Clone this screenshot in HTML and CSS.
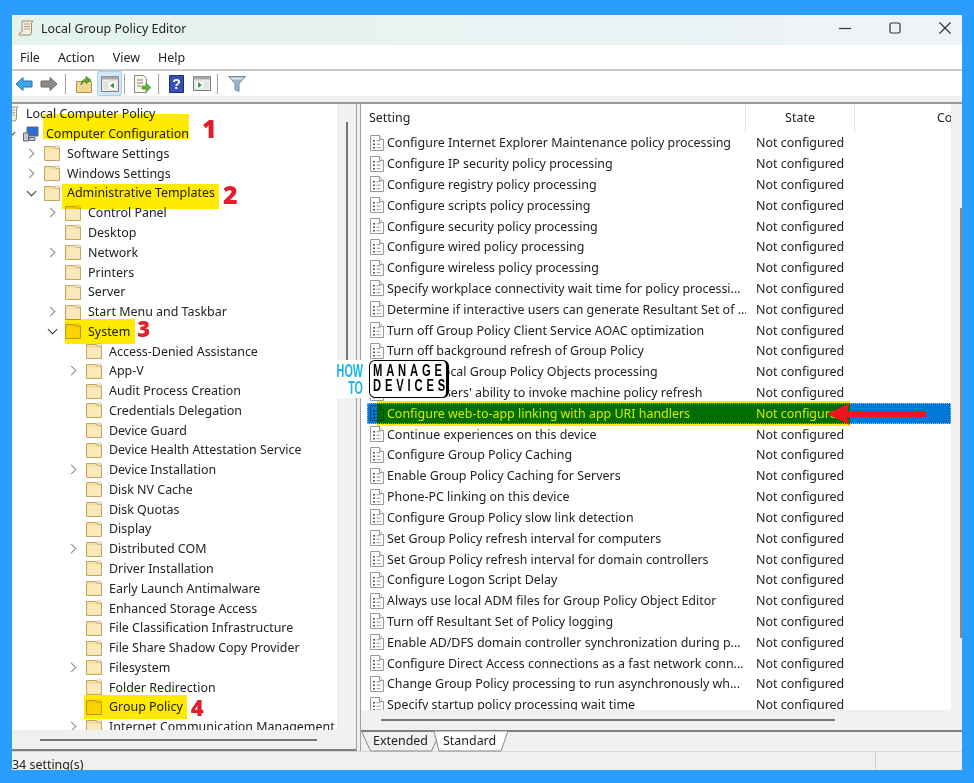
FILE: index.html
```html
<!DOCTYPE html>
<html lang="en">
<head>
    <meta charset="UTF-8">
    <meta name="viewport" content="width=device-width, initial-scale=1.0">
    <title>Local Group Policy Editor</title>
    <link rel="stylesheet" href="styles.css">
</head>
<body>
    <svg class="sprites" width="0" height="0">
        <symbol id="folder" viewBox="0 0 16 16">
            <path d="M.5 15.500V1.500h9.500l1 1.500h4.500v12.500z" fill="#f6dfa2" stroke="#c4a562"/>
            <path d="M1.500 4.500h13v10h-13z" fill="#f9e9bb"/>
            <path d="M11 1h4v2h-4z" fill="#fff" stroke="#c4a562" stroke-width=".6"/>
        </symbol>
        <symbol id="doc" viewBox="0 0 16 16">
            <path d="M1.500.5h9l4 4v11h-13z" fill="#fff" stroke="#999"/>
            <path d="M10.500.5v4h4" fill="#eee" stroke="#999"/>
            <path d="M4 5h2v1.500H4zM4 8.500h2V10H4zM4 12h2v1.500H4z" fill="#555"/>
            <path d="M7.500 5.700h4M7.500 9.200h4M7.500 12.700h4" stroke="#999"/>
        </symbol>
        <symbol id="scroll" viewBox="0 0 16 16">
            <path d="M4 1h11l-1.500 2v9l-1 3H1l1.500-3H4z" fill="#f4eeda" stroke="#9a8f70"/>
            <path d="M6 4h6M6 6.500h6M6 9h6" stroke="#a89f85"/>
        </symbol>
    </svg>

    <div class="window">
        <div class="titlebar">
            <svg class="title-icon"><use href="#scroll"/></svg>
            <span class="title-text">Local Group Policy Editor</span>
            <div class="controls">
                <svg width="12" height="12" viewBox="0 0 12 12"><path d="M0 6.500h12" stroke="#333" stroke-width="1.200"/></svg>
                <svg width="12" height="12" viewBox="0 0 12 12"><rect x="1" y="1" width="10" height="10" rx="1.500" fill="none" stroke="#333" stroke-width="1.200"/></svg>
                <svg width="12" height="12" viewBox="0 0 12 12"><path d="M.5.5l11 11M11.500.5l-11 11" stroke="#333" stroke-width="1.200"/></svg>
            </div>
        </div>

        <div class="menubar">
            <span>File</span>
            <span>Action</span>
            <span>View</span>
            <span>Help</span>
        </div>

        <div class="toolbar">
            <svg class="tool" width="18" height="16" viewBox="0 0 18 16"><path d="M1 8l7-6.500V5h9v6H8v3.500z" fill="#3fa6ea" stroke="#1b74b8"/></svg>
            <svg class="tool tool-fwd" width="18" height="16" viewBox="0 0 18 16"><path d="M17 8l-7-6.500V5H1v6h9v3.500z" fill="#8a8a8a" stroke="#6a6a6a"/></svg>
            <i class="tool-sep"></i>
            <svg class="tool tool-up" width="17" height="18" viewBox="0 0 17 18"><path d="M.5 6.500h15v11H.5z" fill="#f2d68e" stroke="#b5934e"/><path d="M5 10q0-5 5-6V1.500L15 5l-5 3.500V6q-3 .5-5 4z" fill="#62a832" stroke="#3f7d1c" stroke-width=".7"/></svg>
            <div class="tool-on">
                <svg width="18" height="16" viewBox="0 0 18 16"><path d="M.5.500h17v15H.5z" fill="#f4f4f4" stroke="#7a7a7a"/><path d="M.5.500h17v3H.5z" fill="#a8a8a8"/><path d="M2 5h4v9H2z" fill="#dfe6df"/><path d="M7 5h9v9H7z" fill="#fff" stroke="#bbb" stroke-width=".5"/><path d="M13 6.500v6L9 9.500z" fill="#3c9a3c"/></svg>
            </div>
            <i class="tool-sep tool-sep-b"></i>
            <svg class="tool tool-list" width="18" height="18" viewBox="0 0 18 18"><path d="M.5.500h9l3 3v14H.5z" fill="#fbf7e6" stroke="#8c8c8c"/><path d="M3 5h6M3 8h6M3 11h4" stroke="#888"/><path d="M8 11h4V8l5 4.500L12 17v-3H8z" fill="#63b23a" stroke="#3f8a1e" stroke-width=".6"/></svg>
            <i class="tool-sep tool-sep-c"></i>
            <svg class="tool tool-help" width="15" height="18" viewBox="0 0 15 18"><path d="M.5.500h14v17H.5z" fill="#3552b4" stroke="#1b2f78"/><text x="7.500" y="14" text-anchor="middle" class="help-mark">?</text></svg>
            <svg class="tool tool-pane" width="18" height="15" viewBox="0 0 18 15"><path d="M.5.500h17v14H.5z" fill="#f4f4f4" stroke="#7a7a7a"/><path d="M.5.500h17v3H.5z" fill="#a8a8a8"/><path d="M2 5h9v8H2z" fill="#fff" stroke="#bbb" stroke-width=".5"/><path d="M12 5h4v8h-4z" fill="#dfe6df"/><path d="M5 6v6l4-3z" fill="#3c9a3c"/></svg>
            <i class="tool-sep tool-sep-d"></i>
            <svg class="tool tool-filter" width="18" height="16" viewBox="0 0 18 16"><path d="M.5.500h17L11 7.500v8l-4-2v-6z" fill="#9fb6c6" stroke="#6e8798"/><path d="M2 1.500h14l-2 2H4z" fill="#d9e4ec"/></svg>
        </div>

        <div class="panes">
            <div class="left-pane">
                <div class="left-body">
                    <div class="tree">
                        <div class="node d0"><svg class="ico"><use href="#scroll"/></svg><span>Local Computer Policy</span></div>
                        <div class="node d1"><i class="chev open"></i><svg class="ico" viewBox="0 0 16 16"><path d="M4 1h11v9H4z" fill="#2c6fd0" stroke="#666"/><path d="M.5 7h5v8h-5zM6 11.500h6v3H6z" fill="#c4cad4" stroke="#667"/></svg><span class="hl hl-1">Computer Configuration</span><b class="num num-1">1</b></div>
                        <div class="node d2"><i class="chev"></i><svg class="ico"><use href="#folder"/></svg><span>Software Settings</span></div>
                        <div class="node d2"><i class="chev"></i><svg class="ico"><use href="#folder"/></svg><span>Windows Settings</span></div>
                        <div class="node d2"><i class="chev open"></i><svg class="ico"><use href="#folder"/></svg><span class="hl hl-2">Administrative Templates</span><b class="num num-2">2</b></div>
                        <div class="node d3"><i class="chev"></i><svg class="ico"><use href="#folder"/></svg><span>Control Panel</span></div>
                        <div class="node d3"><i class="leaf"></i><svg class="ico"><use href="#folder"/></svg><span>Desktop</span></div>
                        <div class="node d3"><i class="chev"></i><svg class="ico"><use href="#folder"/></svg><span>Network</span></div>
                        <div class="node d3"><i class="leaf"></i><svg class="ico"><use href="#folder"/></svg><span>Printers</span></div>
                        <div class="node d3"><i class="leaf"></i><svg class="ico"><use href="#folder"/></svg><span>Server</span></div>
                        <div class="node d3"><i class="chev"></i><svg class="ico"><use href="#folder"/></svg><span>Start Menu and Taskbar</span></div>
                        <div class="node d3"><i class="chev open"></i><svg class="ico"><use href="#folder"/></svg><span class="hl hl-3">System</span><b class="num num-3">3</b></div>
                        <div class="node d4"><i class="leaf"></i><svg class="ico"><use href="#folder"/></svg><span>Access-Denied Assistance</span></div>
                        <div class="node d4"><i class="chev"></i><svg class="ico"><use href="#folder"/></svg><span>App-V</span></div>
                        <div class="node d4"><i class="leaf"></i><svg class="ico"><use href="#folder"/></svg><span>Audit Process Creation</span></div>
                        <div class="node d4"><i class="leaf"></i><svg class="ico"><use href="#folder"/></svg><span>Credentials Delegation</span></div>
                        <div class="node d4"><i class="leaf"></i><svg class="ico"><use href="#folder"/></svg><span>Device Guard</span></div>
                        <div class="node d4"><i class="leaf"></i><svg class="ico"><use href="#folder"/></svg><span>Device Health Attestation Service</span></div>
                        <div class="node d4"><i class="chev"></i><svg class="ico"><use href="#folder"/></svg><span>Device Installation</span></div>
                        <div class="node d4"><i class="leaf"></i><svg class="ico"><use href="#folder"/></svg><span>Disk NV Cache</span></div>
                        <div class="node d4"><i class="leaf"></i><svg class="ico"><use href="#folder"/></svg><span>Disk Quotas</span></div>
                        <div class="node d4"><i class="leaf"></i><svg class="ico"><use href="#folder"/></svg><span>Display</span></div>
                        <div class="node d4"><i class="chev"></i><svg class="ico"><use href="#folder"/></svg><span>Distributed COM</span></div>
                        <div class="node d4"><i class="leaf"></i><svg class="ico"><use href="#folder"/></svg><span>Driver Installation</span></div>
                        <div class="node d4"><i class="leaf"></i><svg class="ico"><use href="#folder"/></svg><span>Early Launch Antimalware</span></div>
                        <div class="node d4"><i class="leaf"></i><svg class="ico"><use href="#folder"/></svg><span>Enhanced Storage Access</span></div>
                        <div class="node d4"><i class="leaf"></i><svg class="ico"><use href="#folder"/></svg><span>File Classification Infrastructure</span></div>
                        <div class="node d4"><i class="leaf"></i><svg class="ico"><use href="#folder"/></svg><span>File Share Shadow Copy Provider</span></div>
                        <div class="node d4"><i class="chev"></i><svg class="ico"><use href="#folder"/></svg><span>Filesystem</span></div>
                        <div class="node d4"><i class="leaf"></i><svg class="ico"><use href="#folder"/></svg><span>Folder Redirection</span></div>
                        <div class="node d4"><i class="leaf"></i><svg class="ico"><use href="#folder"/></svg><span class="hl hl-4">Group Policy</span><b class="num num-4">4</b></div>
                        <div class="node d4"><i class="chev"></i><svg class="ico"><use href="#folder"/></svg><span>Internet Communication Management</span></div>
                    </div>
                    <div class="vscroll"><i class="vthumb"></i></div>
                </div>
                <div class="hscroll"><i class="hthumb"></i></div>
            </div>

            <div class="right-pane">
                <div class="right-body">
                    <div class="list">
                        <div class="list-head">
                            <div class="col-setting">Setting</div>
                            <div class="col-state">State</div>
                            <div class="col-comment">Comment</div>
                        </div>
                        <div class="row"><svg class="ico"><use href="#doc"/></svg><span class="name">Configure Internet Explorer Maintenance policy processing</span><span class="state">Not configured</span></div>
                        <div class="row"><svg class="ico"><use href="#doc"/></svg><span class="name">Configure IP security policy processing</span><span class="state">Not configured</span></div>
                        <div class="row"><svg class="ico"><use href="#doc"/></svg><span class="name">Configure registry policy processing</span><span class="state">Not configured</span></div>
                        <div class="row"><svg class="ico"><use href="#doc"/></svg><span class="name">Configure scripts policy processing</span><span class="state">Not configured</span></div>
                        <div class="row"><svg class="ico"><use href="#doc"/></svg><span class="name">Configure security policy processing</span><span class="state">Not configured</span></div>
                        <div class="row"><svg class="ico"><use href="#doc"/></svg><span class="name">Configure wired policy processing</span><span class="state">Not configured</span></div>
                        <div class="row"><svg class="ico"><use href="#doc"/></svg><span class="name">Configure wireless policy processing</span><span class="state">Not configured</span></div>
                        <div class="row"><svg class="ico"><use href="#doc"/></svg><span class="name">Specify workplace connectivity wait time for policy processi...</span><span class="state">Not configured</span></div>
                        <div class="row"><svg class="ico"><use href="#doc"/></svg><span class="name">Determine if interactive users can generate Resultant Set of ...</span><span class="state">Not configured</span></div>
                        <div class="row"><svg class="ico"><use href="#doc"/></svg><span class="name">Turn off Group Policy Client Service AOAC optimization</span><span class="state">Not configured</span></div>
                        <div class="row"><svg class="ico"><use href="#doc"/></svg><span class="name">Turn off background refresh of Group Policy</span><span class="state">Not configured</span></div>
                        <div class="row"><svg class="ico"><use href="#doc"/></svg><span class="name">Turn off Local Group Policy Objects processing</span><span class="state">Not configured</span></div>
                        <div class="row"><svg class="ico"><use href="#doc"/></svg><span class="name">Remove users' ability to invoke machine policy refresh</span><span class="state">Not configured</span></div>
                        <div class="row selected">
                            <svg class="ico"><use href="#doc"/></svg><span class="name">Configure web-to-app linking with app URI handlers</span><span class="state">Not configured</span>
                            <i class="row-mark"></i>
                            <svg class="arrow" width="100" height="24" viewBox="0 0 100 24"><path d="M0 12L23 1l-3 8h79v6H20l3 8z" fill="#f0141e"/></svg>
                        </div>
                        <div class="row"><svg class="ico"><use href="#doc"/></svg><span class="name">Continue experiences on this device</span><span class="state">Not configured</span></div>
                        <div class="row"><svg class="ico"><use href="#doc"/></svg><span class="name">Configure Group Policy Caching</span><span class="state">Not configured</span></div>
                        <div class="row"><svg class="ico"><use href="#doc"/></svg><span class="name">Enable Group Policy Caching for Servers</span><span class="state">Not configured</span></div>
                        <div class="row"><svg class="ico"><use href="#doc"/></svg><span class="name">Phone-PC linking on this device</span><span class="state">Not configured</span></div>
                        <div class="row"><svg class="ico"><use href="#doc"/></svg><span class="name">Configure Group Policy slow link detection</span><span class="state">Not configured</span></div>
                        <div class="row"><svg class="ico"><use href="#doc"/></svg><span class="name">Set Group Policy refresh interval for computers</span><span class="state">Not configured</span></div>
                        <div class="row"><svg class="ico"><use href="#doc"/></svg><span class="name">Set Group Policy refresh interval for domain controllers</span><span class="state">Not configured</span></div>
                        <div class="row"><svg class="ico"><use href="#doc"/></svg><span class="name">Configure Logon Script Delay</span><span class="state">Not configured</span></div>
                        <div class="row"><svg class="ico"><use href="#doc"/></svg><span class="name">Always use local ADM files for Group Policy Object Editor</span><span class="state">Not configured</span></div>
                        <div class="row"><svg class="ico"><use href="#doc"/></svg><span class="name">Turn off Resultant Set of Policy logging</span><span class="state">Not configured</span></div>
                        <div class="row"><svg class="ico"><use href="#doc"/></svg><span class="name">Enable AD/DFS domain controller synchronization during p...</span><span class="state">Not configured</span></div>
                        <div class="row"><svg class="ico"><use href="#doc"/></svg><span class="name">Configure Direct Access connections as a fast network conn...</span><span class="state">Not configured</span></div>
                        <div class="row"><svg class="ico"><use href="#doc"/></svg><span class="name">Change Group Policy processing to run asynchronously wh...</span><span class="state">Not configured</span></div>
                        <div class="row"><svg class="ico"><use href="#doc"/></svg><span class="name">Specify startup policy processing wait time</span><span class="state">Not configured</span></div>
                    </div>
                    <div class="vscroll-r"><i class="vthumb-r"></i></div>
                </div>
                <div class="hscroll-r"><i class="hthumb-r"></i></div>
                <div class="tabs">
                    <svg class="tab-shapes" width="150" height="21" viewBox="0 0 150 21"><path d="M.5 0l9 20h61l5-11" fill="none" stroke="#888"/><path d="M73 0l5 20h62l7-20z" fill="#fff" stroke="#888"/></svg>
                    <span class="tab">Extended</span>
                    <span class="tab">Standard</span>
                </div>
            </div>
        </div>

        <div class="statusbar">
            <span class="status-text">34 setting(s)</span>
            <i class="status-cell"></i>
        </div>

        <div class="logo">
            <div class="logo-how">HOW<br>TO</div>
            <div class="logo-box"><span class="logo-text">MANAGE<br>DEVICES</span></div>
        </div>
    </div>
</body>
</html>
```

FILE: styles.css
```css
html, body {
    margin: 0;
    height: 100%;
    overflow: hidden;
}
body {
    background-color: #2a9dfe;
    font-family: "Noto Sans", sans-serif;
    font-size: 12.45px;
    color: #222;
}
.sprites {
    position: absolute;
}
.window {
    position: relative;
    display: flex;
    flex-direction: column;
    width: 950px;
    height: 755px;
    margin: 15px 0 0 12px;
    background-color: #f0f0f0;
    overflow: hidden;
    filter: blur(.4px);
}

/* title bar */
.titlebar {
    display: flex;
    align-items: center;
    height: 30px;
    flex: none;
    padding-left: 6px;
    background: linear-gradient(90deg, #e4f3ec, #eaf3f4 60%, #eff3f8);
}
.title-icon {
    width: 16px;
    height: 16px;
    margin-top: -4px;
}
.title-text {
    margin-left: 7px;
    margin-top: -4px;
}
.controls {
    display: flex;
    gap: 38px;
    margin-left: auto;
    margin-right: 11px;
    margin-top: -4px;
}

/* menu */
.menubar {
    display: flex;
    gap: 18px;
    height: 24px;
    flex: none;
    align-items: center;
    padding-left: 8px;
    background-color: #fff;
    border-bottom: 2px solid #c9c9c9;
    box-sizing: content-box;
}

/* toolbar */
.toolbar {
    display: flex;
    align-items: center;
    height: 25px;
    flex: none;
    background-color: #fff;
    padding-left: 3px;
}
.tool-fwd {
    margin-left: 7px;
}
.tool-sep {
    width: 1px;
    height: 20px;
    margin-left: 7px;
    background-color: #a5a5a5;
}
.tool-up {
    margin-left: 10px;
}
.tool-on {
    display: flex;
    align-items: center;
    justify-content: center;
    width: 23px;
    height: 23px;
    margin-left: 4px;
    background-color: #d4e7f8;
    border: 1px solid #a8d0f2;
    border-radius: 2px;
}
.tool-sep-b {
    margin-left: 2px;
}
.tool-list {
    margin-left: 9px;
}
.tool-sep-c {
    margin-left: 6px;
}
.tool-help {
    margin-left: 10px;
}
.tool-pane {
    margin-left: 9px;
}
.tool-sep-d {
    margin-left: 6px;
}
.tool-filter {
    margin-left: 10px;
}
.help-mark {
    fill: #fff;
    font-family: "Liberation Sans", sans-serif;
    font-size: 14px;
    font-weight: bold;
}

/* panes */
.panes {
    display: flex;
    flex: 1;
    min-height: 0;
    margin-top: 6px;
    border-top: 2px solid #9a9a9a;
    border-bottom: 1px solid #d8d8d8;
    background-color: #f0f0f0;
}
.left-pane {
    display: flex;
    flex-direction: column;
    width: 344px;
    flex: none;
    border-right: 1px solid #a0a0a0;
    border-bottom: 2px solid #808080;
}
.left-body {
    display: flex;
    flex: 1;
    min-height: 0;
}
.tree {
    width: 325px;
    flex: none;
    background-color: #fff;
    overflow: hidden;
}
.node {
    display: flex;
    align-items: center;
    height: 19.77px;
    white-space: nowrap;
}
.d0 {
    margin-left: -9px;
}
.d1 {
    margin-left: -9px;
}
.d2 {
    margin-left: 12px;
}
.d3 {
    margin-left: 33px;
}
.d4 {
    margin-left: 54px;
}
.ico {
    width: 16px;
    height: 16px;
    flex: none;
}
.node .ico {
    margin-right: 7px;
}
.chev, .leaf {
    display: block;
    width: 14px;
    margin-right: 6px;
    flex: none;
}
.chev::before {
    content: "";
    display: block;
    width: 6px;
    height: 6px;
    margin-left: 2px;
    border-top: 1.500px solid #8a8a8a;
    border-right: 1.500px solid #8a8a8a;
    transform: rotate(45deg);
}
.chev.open::before {
    margin-left: 4px;
    margin-top: -3px;
    border-color: #333;
    transform: rotate(135deg);
}

/* yellow marker over tree labels */
.hl {
    position: relative;
}
.hl::after {
    content: "";
    position: absolute;
    background-color: #ffea00;
    mix-blend-mode: multiply;
}
.hl-1::after {
    left: -3px;
    right: 0;
    top: -11px;
    bottom: 3px;
}
.hl-2::after {
    left: -5px;
    right: -4px;
    top: 0;
    bottom: -8px;
}
.hl-3::after {
    left: -23px;
    right: -5px;
    top: -4px;
    bottom: -4px;
}
.hl-4::after {
    left: -25px;
    right: -4px;
    top: -3px;
    bottom: -4px;
}
.num {
    position: relative;
    line-height: 0;
    color: #e01e2c;
    font-family: "Open Sans", sans-serif;
    font-size: 22px;
    font-weight: 800;
}
.num-1 {
    top: -6px;
    margin-left: 13px;
    font-size: 25px;
}
.num-2 {
    top: 1px;
    margin-left: 8px;
    font-size: 25px;
}
.num-3 {
    top: -3px;
    margin-left: 7px;
}
.num-4 {
    margin-left: 8px;
}
.vscroll {
    flex: 1;
    padding: 18px 0 0 9px;
}
.vthumb {
    display: block;
    width: 2px;
    height: 265px;
    background-color: #777;
}
.hscroll {
    height: 19px;
    flex: none;
    padding: 9px 0 0 28px;
    box-sizing: border-box;
}
.hthumb {
    display: block;
    width: 277px;
    height: 2px;
    background-color: #777;
}

/* right side */
.right-pane {
    display: flex;
    flex-direction: column;
    flex: 1;
    min-width: 0;
    margin-left: 3px;
    border-left: 1px solid #a0a0a0;
}
.right-body {
    display: flex;
    flex: 1;
    min-height: 0;
}
.list {
    width: 590px;
    flex: none;
    background-color: #fff;
    border-bottom-right-radius: 4px;
    overflow: hidden;
}
.list-head {
    display: flex;
    height: 28.4px;
    line-height: 28px;
}
.col-setting {
    width: 385px;
    padding-left: 8px;
    box-sizing: border-box;
    border-right: 1px solid #e5e5e5;
}
.col-state {
    width: 109px;
    text-align: center;
    box-sizing: border-box;
    border-right: 1px solid #e5e5e5;
}
.col-comment {
    flex: 1;
    padding-left: 82px;
    white-space: nowrap;
    overflow: hidden;
}
.row {
    position: relative;
    display: flex;
    align-items: center;
    height: 20.82px;
    margin-left: 6px;
    white-space: nowrap;
}
.row .ico {
    margin-left: 2px;
    margin-right: 2px;
}
.name {
    width: 359px;
    flex: none;
    overflow: hidden;
}
.state {
    margin-left: 10px;
}
.selected {
    background-color: #0078d7;
    color: #d4ffff;
    outline: 1px dotted #9cc9ee;
    outline-offset: -1px;
}
.selected .ico {
    mix-blend-mode: multiply;
}
.row-mark {
    position: absolute;
    left: 10px;
    width: 473px;
    top: -2px;
    bottom: -2px;
    background-color: #ffea00;
    mix-blend-mode: multiply;
}
.arrow {
    position: absolute;
    left: 460px;
    top: -1px;
}
.vscroll-r {
    flex: 1;
    padding: 104px 0 0 9px;
}
.vthumb-r {
    display: block;
    width: 2px;
    height: 430px;
    background-color: #888;
}
.hscroll-r {
    height: 20px;
    flex: none;
    padding: 9px 0 0 20px;
    box-sizing: border-box;
}
.hthumb-r {
    display: block;
    width: 454px;
    height: 2px;
    background-color: #777;
}
.tabs {
    position: relative;
    display: flex;
    height: 21px;
    flex: none;
    padding-left: 12px;
    border-top: 2px solid #808080;
    box-sizing: border-box;
    line-height: 18px;
}
.tab-shapes {
    position: absolute;
    left: 0;
    top: -1px;
}
.tab {
    position: relative;
    width: 70px;
    white-space: nowrap;
}

/* status bar */
.statusbar {
    display: flex;
    height: 18px;
    flex: none;
    line-height: 26px;
    overflow: hidden;
}
.status-text {
    width: 863px;
    flex: none;
}
.status-cell {
    flex: 1;
    border-left: 1px solid #d4d4d4;
}

/* site logo laid over the panes */
.logo {
    position: absolute;
    left: 324px;
    top: 345px;
    display: flex;
    height: 38px;
    background-color: #fff;
}
.logo-how {
    width: 55px;
    margin-left: -22px;
    padding-right: 10px;
    padding-top: 3px;
    box-sizing: border-box;
    text-align: right;
    color: #1cb4ea;
    font-family: "Liberation Sans", sans-serif;
    font-size: 18px;
    font-weight: bold;
    line-height: 17px;
    white-space: nowrap;
    transform: scaleX(.6);
    transform-origin: right;
}
.logo-box {
    width: 80px;
    box-sizing: border-box;
    padding: 2px 0 0 3px;
    border: 1.500px solid #000;
    border-right-width: 3px;
    border-radius: 6px;
    overflow: hidden;
}
.logo-text {
    display: block;
    color: #000;
    font-family: "Liberation Sans", sans-serif;
    font-size: 16px;
    font-weight: bold;
    line-height: 15px;
    letter-spacing: 5.500px;
    white-space: nowrap;
    transform: scaleX(.7);
    transform-origin: left;
}
```
